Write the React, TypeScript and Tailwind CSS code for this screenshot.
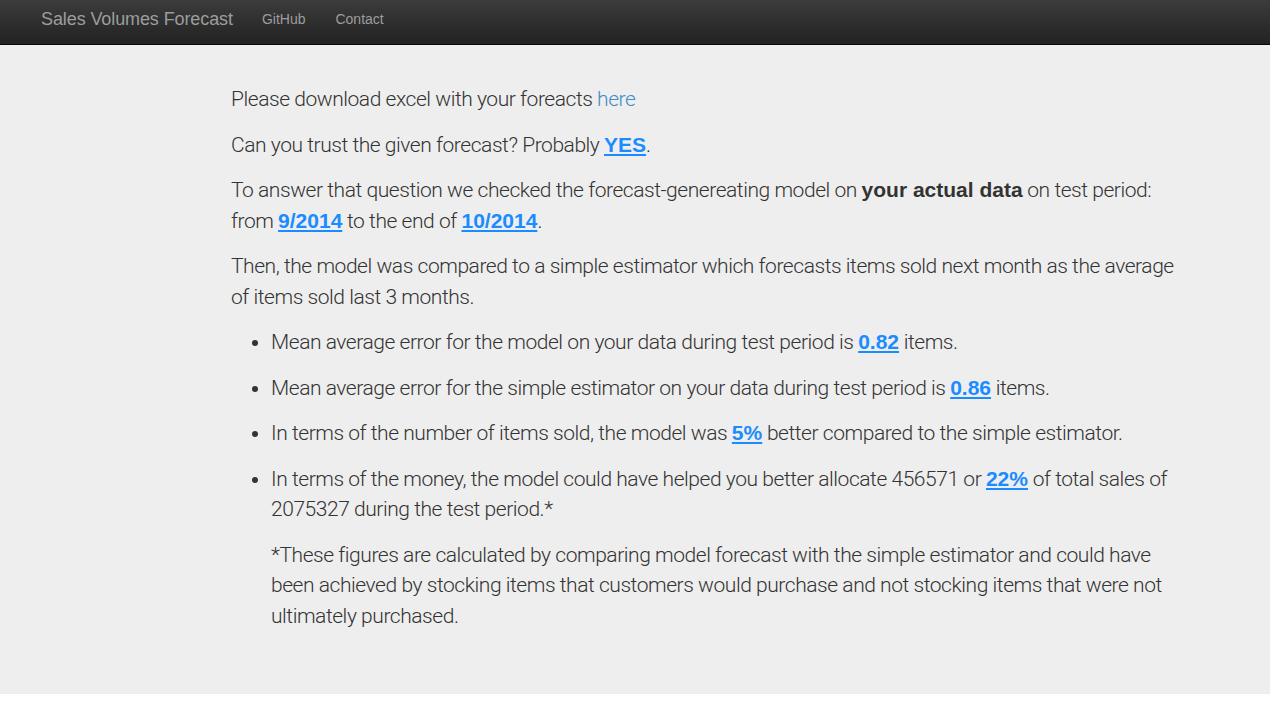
export default function App() {
  const lnk = "font-bold underline text-[#1a8cff] tracking-normal font-['Liberation_Sans',Arial,sans-serif]";
  return (
    <div className="min-h-[723px] bg-white" style={{ fontFamily: '"Liberation Sans", Arial, sans-serif' }}>
      <nav className="h-[45px] bg-gradient-to-b from-[#3c3c3c] to-[#222222] border-b border-[#080808] flex items-center">
        <span className="ml-[41px] text-[18px] tracking-[-0.1px] text-[#9d9d9d] leading-none mb-[7px]">Sales Volumes Forecast</span>
        <span className="ml-[29px] text-[14px] text-[#9d9d9d] leading-none mb-[7px]">GitHub</span>
        <span className="ml-[30px] text-[14px] text-[#9d9d9d] leading-none mb-[7px]">Contact</span>
      </nav>
      <div className="bg-[#eeeeee] pt-[39px] pb-[48px]">
        <div className="ml-[231px] w-[952px] text-[21px] leading-[30.5px] tracking-[-0.45px] text-[#333333] font-light" style={{ fontFamily: 'Roboto, "Liberation Sans", sans-serif' }}>
          <p className="mb-[15px]">Please download excel with your foreacts <span className="text-[#428bca]">here</span></p>
          <p className="mb-[15px]">Can you trust the given forecast? Probably <span className={lnk}>YES</span>.</p>
          <p className="mb-[15px]">To answer that question we checked the forecast-genereating model on <b className="font-bold tracking-normal font-['Liberation_Sans',Arial,sans-serif]">your actual data</b> on test period: from <span className={lnk}>9/2014</span> to the end of <span className={lnk}>10/2014</span>.</p>
          <p className="mb-[15px]">Then, the model was compared to a simple estimator which forecasts items sold next month as the average of items sold last 3 months.</p>
          <ul className="pl-[40px] list-disc">
            <li><p className="mb-[15px]">Mean average error for the model on your data during test period is <span className={lnk}>0.82</span> items.</p></li>
            <li><p className="mb-[15px]">Mean average error for the simple estimator on your data during test period is <span className={lnk}>0.86</span> items.</p></li>
            <li><p className="mb-[15px]">In terms of the number of items sold, the model was <span className={lnk}>5%</span> better compared to the simple estimator.</p></li>
            <li>
              <p className="mb-[15px]">In terms of the money, the model could have helped you better allocate 456571 or <span className={lnk}>22%</span> of total sales of 2075327 during the test period.*</p>
              <p className="mb-[15px]">*These figures are calculated by comparing model forecast with the simple estimator and could have been achieved by stocking items that customers would purchase and not stocking items that were not ultimately purchased.</p>
            </li>
          </ul>
        </div>
      </div>
    </div>
  );
}
